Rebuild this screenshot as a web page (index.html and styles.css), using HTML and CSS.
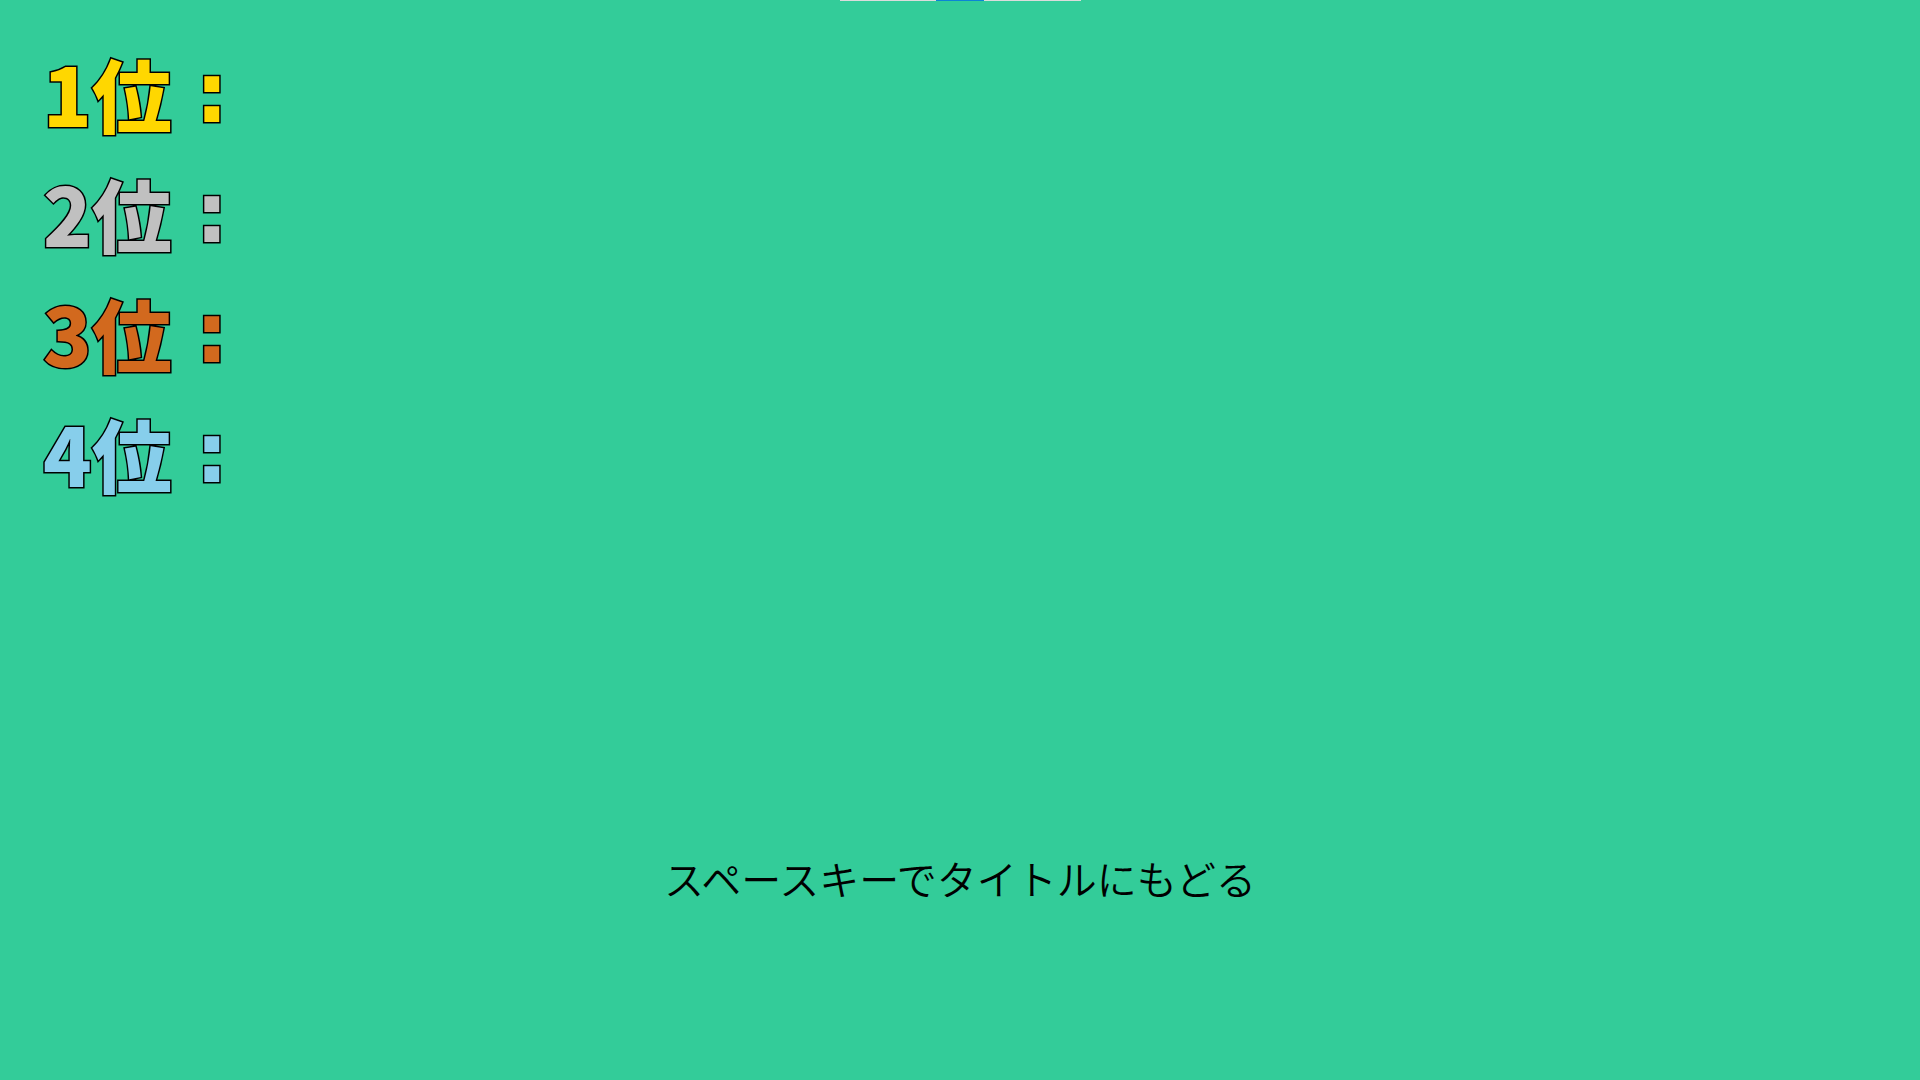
FILE: index.html
```html
<!DOCTYPE html>
<html lang="ja">
<head>
<meta charset="utf-8">
<title>ランキング</title>
<link rel="stylesheet" href="styles.css">
</head>
<body>
<div class="screen">
  <div class="progress">
    <div class="progress-seg"></div>
    <div class="progress-seg progress-active"></div>
    <div class="progress-seg progress-rest"></div>
  </div>
  <ol class="ranking">
    <li class="rank rank-1">1位<span class="sep"> :</span></li>
    <li class="rank rank-2">2位<span class="sep"> :</span></li>
    <li class="rank rank-3">3位<span class="sep"> :</span></li>
    <li class="rank rank-4">4位<span class="sep"> :</span></li>
  </ol>
  <p class="hint">スペースキーでタイトルにもどる</p>
</div>
</body>
</html>
```
FILE: styles.css
```css
html, body {
  margin: 0;
  padding: 0;
  background: #33cc99;
}
.screen {
  width: 1920px;
  height: 1080px;
  display: flex;
  flex-direction: column;
  font-family: "Noto Sans CJK JP", "Noto Sans", sans-serif;
  overflow: hidden;
}
.progress {
  display: flex;
  justify-content: center;
  height: 1px;
}
.progress-seg {
  width: 96px;
  background: #dcdcdc;
}
.progress-active {
  width: 48px;
  background: #0c84d6;
}
.progress-rest {
  width: 97px;
}
.ranking {
  list-style: none;
  margin: 0;
  padding: 31px 0 0 43px;
}
.rank {
  font-family: "Noto Sans CJK JP", sans-serif;
  font-size: 80px;
  font-weight: 900;
  line-height: 120px;
  height: 120px;
  -webkit-text-stroke: 3px #000;
  paint-order: stroke fill;
  white-space: nowrap;
}
.sep {
  font-family: "DejaVu Sans", sans-serif;
  font-weight: 700;
  font-size: 84px;
  line-height: 0;
  vertical-align: 5px;
  margin-left: -6px;
}
.rank-1 { color: #ffd700; }
.rank-2 { color: #c0c0c0; }
.rank-3 { color: #d2691e; }
.rank-4 { color: #87ceeb; }
.hint {
  margin: 336px 0 0 0;
  text-align: center;
  font-size: 40px;
  font-weight: 350;
  line-height: 60px;
  color: #000;
}
```
